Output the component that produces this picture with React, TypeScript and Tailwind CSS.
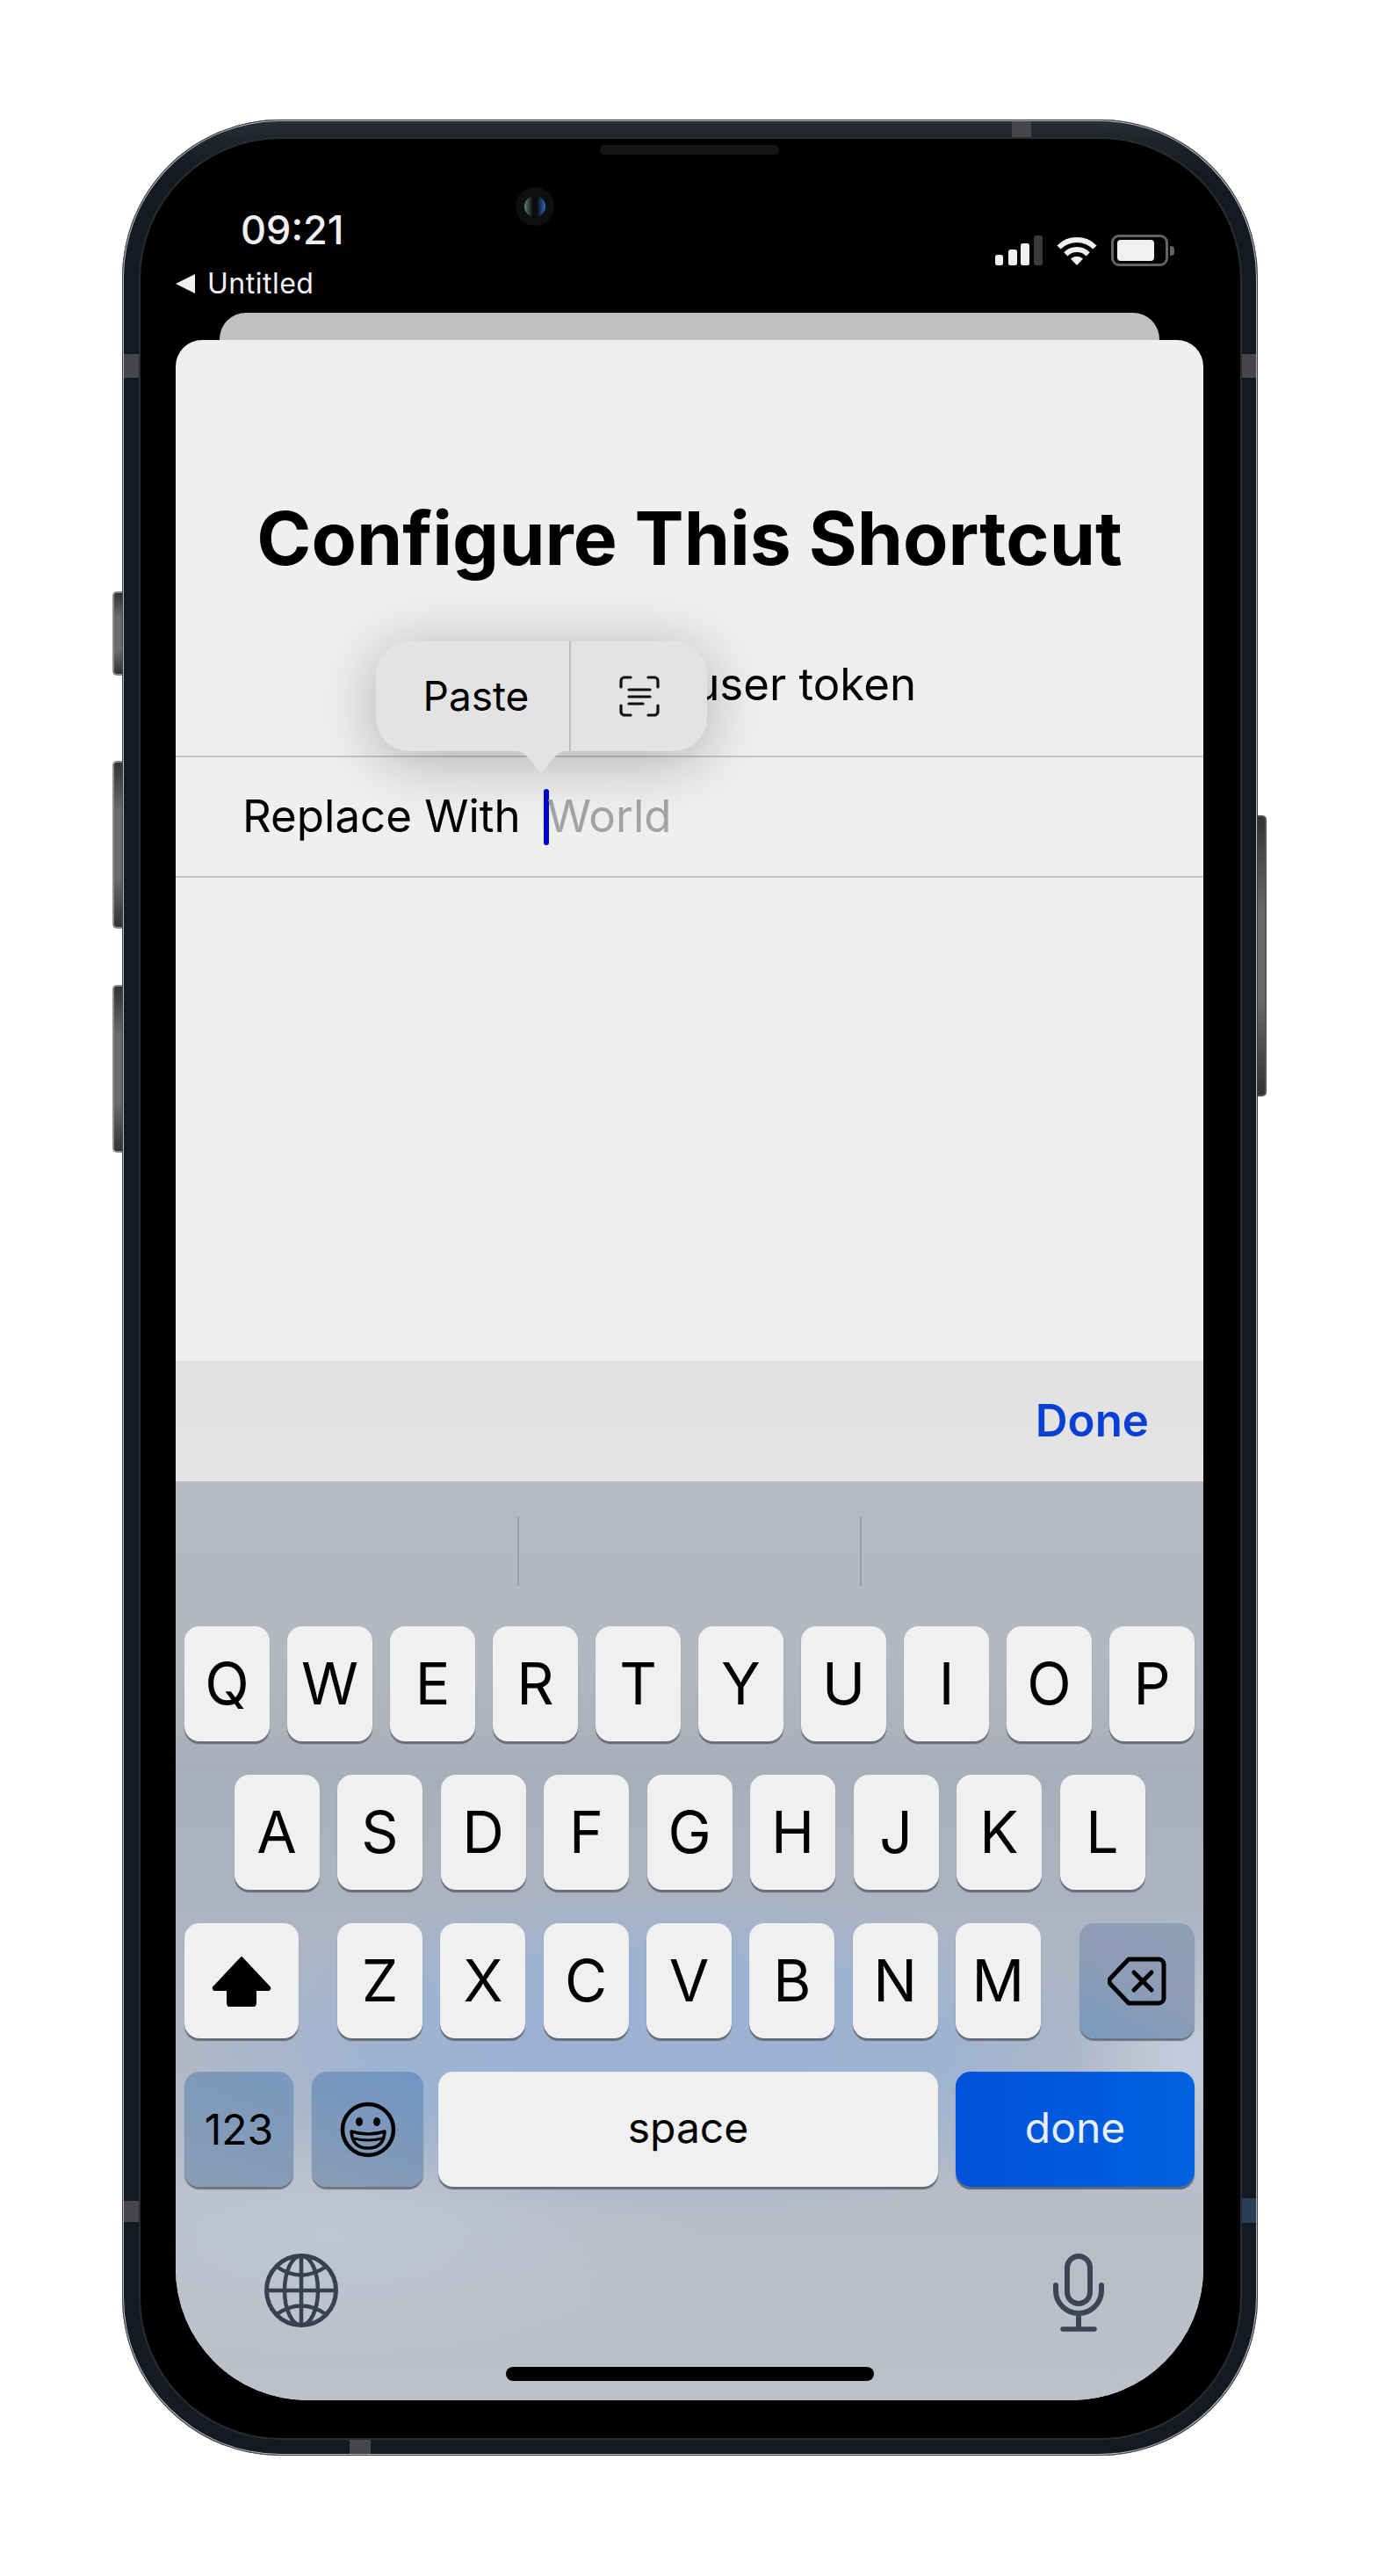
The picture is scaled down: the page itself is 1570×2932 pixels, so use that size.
const ROW1 = ["Q", "W", "E", "R", "T", "Y", "U", "I", "O", "P"]
const ROW2 = ["A", "S", "D", "F", "G", "H", "J", "K", "L"]
const ROW3 = ["Z", "X", "C", "V", "B", "N", "M"]

const keyClass =
  "flex items-center justify-center rounded-[17px] bg-[#f0f0f0] shadow-[0_3px_1px_#666d79] text-black"

const LetterKey = ({ label }: { label: string }) => (
  <div className={`${keyClass} h-[131px] w-[97px] pb-[2px] text-[66px] leading-none font-normal`}>{label}</div>
)

const SignalIcon = () => (
  <svg width="54" height="35" viewBox="0 0 54 35">
    <rect x="0" y="22" width="9" height="12" rx="2.5" fill="#f0f0f0" />
    <rect x="15" y="16" width="10" height="18" rx="2.5" fill="#f0f0f0" />
    <rect x="29" y="9" width="10" height="25" rx="2.5" fill="#f0f0f0" />
    <rect x="44" y="0" width="10" height="34" rx="2.5" fill="#3a3a38" />
  </svg>
)

const WifiIcon = () => (
  <svg width="46" height="35" viewBox="0 0 46 35" fill="none">
    <path d="M2.5 13.5A29 29 0 0 1 43.5 13.5" stroke="#f0f0f0" strokeWidth="6" />
    <path d="M10.3 21.3A18 18 0 0 1 35.7 21.3" stroke="#f0f0f0" strokeWidth="6" />
    <path d="M23 34L16 26.5A10 10 0 0 1 30 26.5Z" fill="#f0f0f0" />
  </svg>
)

const BatteryIcon = () => (
  <div className="flex items-center gap-[2px]">
    <div className="flex h-[36px] w-[65px] items-center rounded-[9px] border-[3px] border-[#636363] pl-[4px]">
      <div className="h-[24px] w-[42px] rounded-[4px] bg-[#f0f0f0]" />
    </div>
    <div className="h-[11px] w-[5px] rounded-r-[4px] bg-[#636363]" />
  </div>
)

const ScanTextIcon = () => (
  <svg width="46" height="47" viewBox="0 0 46 47" fill="none" stroke="#111" strokeWidth="3.2" strokeLinecap="round" strokeLinejoin="round">
    <path d="M2 13V6a4 4 0 0 1 4-4h7" />
    <path d="M33 2h7a4 4 0 0 1 4 4v7" />
    <path d="M2 34v7a4 4 0 0 0 4 4h7" />
    <path d="M33 45h7a4 4 0 0 0 4-4v-7" />
    <path d="M11 16h24" />
    <path d="M11 24h24" />
    <path d="M11 32h16" />
  </svg>
)

const ShiftIcon = () => (
  <svg width="68" height="58" viewBox="0 0 68 58">
    <path
      d="M34 2L66 36a2 2 0 0 1-1.5 3H50v15a4 4 0 0 1-4 4H22a4 4 0 0 1-4-4V39H3.5A2 2 0 0 1 2 36Z"
      fill="#000"
      stroke="#000"
      strokeWidth="2"
      strokeLinejoin="round"
    />
  </svg>
)

const DeleteIcon = () => (
  <svg width="67" height="56" viewBox="0 0 67 56" fill="none" stroke="#000" strokeWidth="5" strokeLinecap="round" strokeLinejoin="round">
    <path d="M24 3H58a6 6 0 0 1 6 6V47a6 6 0 0 1-6 6H24L3 31a5 5 0 0 1 0-6Z" />
    <path d="M30 18L50 38" />
    <path d="M50 18L30 38" />
  </svg>
)

const EmojiIcon = () => (
  <svg width="64" height="64" viewBox="0 0 64 64" fill="none" stroke="#000" strokeWidth="4.5">
    <circle cx="32" cy="32" r="29" />
    <ellipse cx="22" cy="23" rx="4" ry="5" fill="#000" stroke="none" />
    <ellipse cx="42" cy="23" rx="4" ry="5" fill="#000" stroke="none" />
    <path d="M13 34Q32 40 51 34Q50 53 32 53Q14 53 13 34Z" strokeWidth="3.6" strokeLinejoin="round" />
    <path d="M16 42Q32 46 48 42" strokeWidth="3.2" />
  </svg>
)

const GlobeIcon = () => (
  <svg width="84" height="84" viewBox="0 0 84 84" fill="none" stroke="#38424e" strokeWidth="4.5">
    <circle cx="42" cy="42" r="39.5" strokeWidth="5" />
    <ellipse cx="42" cy="42" rx="19" ry="39.5" />
    <path d="M42 2V82" />
    <path d="M2 42H82" />
    <path d="M14 15Q42 34 70 15" />
    <path d="M14 69Q42 50 70 69" />
  </svg>
)

const MicIcon = () => (
  <svg width="58" height="90" viewBox="0 0 58 90" fill="none" stroke="#3b4652" strokeWidth="6" strokeLinecap="round">
    <rect x="16" y="3" width="26" height="54" rx="13" />
    <path d="M3 36V42a26 26 0 0 0 52 0V36" />
    <path d="M29 68V85" />
    <path d="M11 86H47" strokeWidth="5.5" />
  </svg>
)

const App = () => {
  return (
    <div className="relative h-[2932px] w-[1570px] overflow-hidden bg-white pt-[136px] pl-[139px] [font-family:Inter,'Noto_Sans',sans-serif]">
      {/* side buttons */}
      <div className="absolute top-[673px] left-[128px] h-[96px] w-[12px] rounded-l-[5px] border-2 border-r-0 border-[#8e8e8e] bg-[linear-gradient(180deg,#333,#6c6c6c_30%,#6c6c6c_70%,#333)]" />
      <div className="absolute top-[866px] left-[128px] h-[191px] w-[12px] rounded-l-[5px] border-2 border-r-0 border-[#8e8e8e] bg-[linear-gradient(180deg,#333,#6c6c6c_30%,#6c6c6c_70%,#333)]" />
      <div className="absolute top-[1121px] left-[128px] h-[191px] w-[12px] rounded-l-[5px] border-2 border-r-0 border-[#8e8e8e] bg-[linear-gradient(180deg,#333,#6c6c6c_30%,#6c6c6c_70%,#333)]" />
      <div className="absolute top-[928px] left-[1431px] h-[320px] w-[11px] rounded-r-[5px] border-2 border-l-0 border-[#555] bg-[linear-gradient(180deg,#333,#6a6a6a_35%,#6a6a6a_65%,#333)]" />

      {/* phone frame */}
      <div className="relative h-[2659px] w-[1293px] rounded-[180px] bg-[linear-gradient(180deg,#2b2f36_0px,#20252c_22px,#151a22_60px,#151a22_100%)] pt-[22px] pr-[20px] pb-[20px] pl-[21px] shadow-[inset_0_0_0_1px_#3c3f44,inset_0_0_0_2px_#b5b8bc]">
        {/* antenna bands */}
        <div className="absolute top-[2px] left-[1013px] h-[20px] w-[22px] bg-[#45474b]" />
        <div className="absolute top-[267px] left-[2px] h-[27px] w-[18px] bg-[#45474b]" />
        <div className="absolute top-[267px] right-[2px] h-[27px] w-[17px] bg-[#45474b]" />
        <div className="absolute top-[2369px] left-[2px] h-[24px] w-[18px] bg-[#45474b]" />
        <div className="absolute top-[2366px] right-[2px] h-[28px] w-[17px] bg-[#2a3f55]" />
        <div className="absolute bottom-[2px] left-[259px] h-[17px] w-[24px] bg-[#45474b]" />

        <div className="relative flex h-full flex-col rounded-[160px] bg-black pr-[42px] pb-[43px] pl-[40px] shadow-[0_0_0_2px_#2b2c2e]">
          {/* speaker and camera */}
          <div className="absolute top-[7px] left-[523px] h-[11px] w-[204px] rounded-full bg-[#141517]" />
          <div className="absolute top-[55px] left-[427px] flex h-[44px] w-[44px] items-center justify-center rounded-full bg-[#0e0f10]">
            <div className="h-[24px] w-[24px] rounded-full bg-[linear-gradient(90deg,#5c8570,#0a0c0e_40%,#0a0c0e_60%,#2c6cc0)]" />
          </div>

          {/* status bar */}
          <div className="flex h-[198px] flex-none items-start justify-between">
            <div className="flex flex-col pt-[82px]">
              <div className="pl-[74px] text-[45px] leading-[44px] font-medium text-[#f0f0f0]">09:21</div>
              <div className="mt-[21px] flex items-center gap-[14px] text-[#f0f0f0]">
                <div className="h-0 w-0 border-y-[11px] border-r-[22px] border-y-transparent border-r-[#f0f0f0]" />
                <div className="text-[32px] leading-[36px] tracking-[0.5px]">Untitled</div>
              </div>
            </div>
            <div className="flex items-center gap-[16px] pt-[109px] pr-[33px]">
              <SignalIcon />
              <WifiIcon />
              <BatteryIcon />
            </div>
          </div>

          {/* card stacked behind the sheet */}
          <div className="mx-[50px] h-[31px] flex-none rounded-t-[30px] bg-[#c0c0c0]" />

          <div className="relative flex min-h-0 flex-1 flex-col overflow-hidden rounded-t-[30px] rounded-b-[150px] bg-[#efefef] text-black">
            <h1 className="pt-[166px] text-center text-[84px] leading-[120px] font-bold">Configure This Shortcut</h1>
            <p className="mt-[71px] mb-[46px] text-center text-[51px] leading-[70px]">Enter your user token</p>

            <div className="flex h-[139px] flex-none items-center border-y-2 border-[#c6c6c6] pl-[76px] text-[51px]">
              <span>Replace With</span>
              <span className="ml-[26px] h-[64px] w-[6px] rounded-full bg-[#0000d6]" />
              <span className="-ml-[2px] text-[#a3a3a6]">World</span>
            </div>

            <div className="flex-1" />

            <div className="flex h-[137px] flex-none items-center justify-end bg-[linear-gradient(180deg,#e1e1e1,#e4e4e4)] pr-[62px] text-[51px] font-semibold text-[#0a3fd6]">
              Done
            </div>

            {/* keyboard */}
            <div className="flex h-[1046px] flex-none flex-col bg-[radial-gradient(ellipse_130px_170px_at_98%_63%,#c3cddd_0%,transparent_100%),radial-gradient(ellipse_560px_190px_at_47%_62%,#9bb2d3_0%,#9db3d2_55%,transparent_100%),radial-gradient(ellipse_420px_140px_at_15%_82%,#bfc6d2_0%,transparent_100%),linear-gradient(180deg,#b4b9c3_0%,#b2b7c1_20%,#a9afba_31%,#aeb5c2_50%,#b5bbc6_72%,#bbbfc9_90%,#bdc0c9_100%)]">
              <div className="flex flex-none justify-center gap-[388px] pt-[41px]">
                <div className="h-[78px] w-[2px] bg-[#979ca6]" />
                <div className="h-[78px] w-[2px] bg-[#979ca6]" />
              </div>

              <div className="mt-[46px] flex flex-none flex-col gap-[38px] px-[10px]">
                <div className="flex justify-between">
                  {ROW1.map((k) => (
                    <LetterKey key={k} label={k} />
                  ))}
                </div>
                <div className="flex justify-center gap-[20.5px]">
                  {ROW2.map((k) => (
                    <LetterKey key={k} label={k} />
                  ))}
                </div>
                <div className="flex justify-between">
                  <div className={`${keyClass} h-[131px] w-[130px]`}>
                    <ShiftIcon />
                  </div>
                  <div className="flex gap-[20.3px]">
                    {ROW3.map((k) => (
                      <LetterKey key={k} label={k} />
                    ))}
                  </div>
                  <div className="flex h-[131px] w-[131px] items-center justify-center rounded-[17px] bg-[linear-gradient(30deg,#7a9abf,#8e9db5_55%,#8f9fb6)] shadow-[0_3px_1px_#6c7584]">
                    <DeleteIcon />
                  </div>
                </div>
                <div className="flex">
                  <div className="flex h-[131px] w-[124px] items-center justify-center rounded-[17px] bg-[linear-gradient(20deg,#8a9cb5,#7999bd)] text-[48px] shadow-[0_3px_1px_#6c7584]">
                    123
                  </div>
                  <div className="ml-[21px] flex h-[131px] w-[127px] items-center justify-center rounded-[17px] bg-[linear-gradient(20deg,#8a9cb5,#7095c3)] shadow-[0_3px_1px_#6c7584]">
                    <EmojiIcon />
                  </div>
                  <div className={`${keyClass} ml-[17px] h-[131px] w-[569px] pb-[4px] text-[48px]`}>space</div>
                  <div className="ml-[20px] flex h-[131px] w-[272px] items-center justify-center rounded-[17px] bg-[linear-gradient(90deg,#0051db,#0062e0)] pb-[4px] text-[48px] text-[#e8eefa] shadow-[0_3px_1px_#606772]">
                    done
                  </div>
                </div>
              </div>

              <div className="mt-[76px] flex flex-none items-start justify-between pr-[113px] pl-[101px]">
                <GlobeIcon />
                <MicIcon />
              </div>
              <div className="mt-[39px] h-[16px] w-[419px] flex-none self-center rounded-full bg-black" />
            </div>

            {/* paste menu */}
            <div className="absolute top-[343px] left-[228px] z-10 flex h-[125px] w-[377px] rounded-[38px] bg-[#e3e3e3] shadow-[0_10px_70px_rgba(0,0,0,0.28)]">
              <div className="flex w-[220px] items-center justify-center pl-[8px] text-[46px]">Paste</div>
              <div className="h-full w-[2px] bg-[#bdbdbd]" />
              <div className="flex flex-1 items-center justify-center">
                <ScanTextIcon />
              </div>
              <svg className="absolute top-[124px] left-[158px]" width="60" height="25" viewBox="0 0 60 25">
                <path d="M0 0H60Q50 2 45 8L32 24Q30 25 28 24L15 8Q10 2 0 0Z" fill="#e3e3e3" />
              </svg>
            </div>
          </div>
        </div>
      </div>
    </div>
  )
}
export default App
